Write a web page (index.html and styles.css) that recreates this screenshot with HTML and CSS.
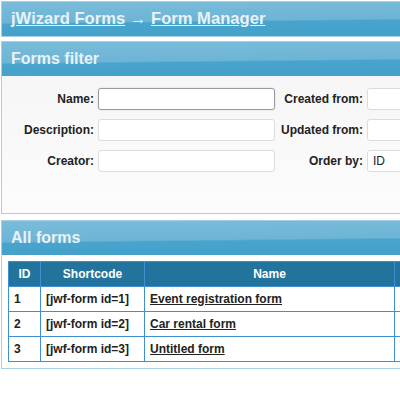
FILE: index.html
```html
<!DOCTYPE html>
<html lang="en">
<head>
  <meta charset="UTF-8" />
  <title>Form Manager</title>
  <link rel="stylesheet" href="styles.css">
</head>
<body>
  <div class="page">
    <div class="panel">
      <h1 class="band"><a href="#">jWizard Forms</a> &rarr; <a href="#">Form Manager</a></h1>
    </div>

    <div class="panel">
      <h2 class="band">Forms filter</h2>
      <div class="filter">
        <label>Name:</label>
        <input class="field" type="text" autofocus />
        <label>Created from:</label>
        <input class="field" type="text" />
        <label>Description:</label>
        <input class="field" type="text" />
        <label>Updated from:</label>
        <input class="field" type="text" />
        <label>Creator:</label>
        <input class="field" type="text" />
        <label>Order by:</label>
        <select class="field">
          <option>ID</option>
          <option>Name</option>
        </select>
      </div>
    </div>

    <div class="panel">
      <h2 class="band">All forms</h2>
      <div class="list">
        <table class="forms">
          <thead>
            <tr>
              <th class="c-id">ID</th>
              <th class="c-code">Shortcode</th>
              <th class="c-name">Name</th>
              <th>Created</th>
            </tr>
          </thead>
          <tbody>
            <tr>
              <td>1</td>
              <td>[jwf-form id=1]</td>
              <td><a href="#">Event registration form</a></td>
              <td class="date">2013-05-14</td>
            </tr>
            <tr>
              <td>2</td>
              <td>[jwf-form id=2]</td>
              <td><a href="#">Car rental form</a></td>
              <td class="date">2013-05-14</td>
            </tr>
            <tr>
              <td>3</td>
              <td>[jwf-form id=3]</td>
              <td><a href="#">Untitled form</a></td>
              <td class="date">2013-05-16</td>
            </tr>
          </tbody>
        </table>
      </div>
    </div>
  </div>
</body>
</html>
```

FILE: styles.css
```css
html, body {
  overflow: hidden;
}
body {
  margin: 0;
  padding: 1px;
  background: #fff;
  font-family: "Liberation Sans", Arial, sans-serif;
  font-size: 12px;
  color: #222;
}
.page {
  width: 560px;
}
.panel {
  border: 1px solid #a9cfe3;
  background: #fff;
  margin-bottom: 4px;
}
.panel + .panel + .panel {
  margin-top: 6px;
}
.band {
  margin: 0;
  height: 34px;
  line-height: 34px;
  padding-left: 9px;
  font-size: 16px;
  font-weight: bold;
  color: #e6f3f9;
  background: linear-gradient(179.4deg, #7abcda 0, #6db4d5 52%, #48a4cc 56%, #42a0ca 100%);
}
h1.band {
  font-size: 16.6px;
}
.band a {
  color: #e6f3f9;
}
.filter {
  display: grid;
  grid-template-columns: 92px 177px 84px 177px;
  column-gap: 4px;
  row-gap: 9px;
  align-items: center;
  padding: 12px 0 41px;
  background: linear-gradient(#f6f6f6, #fcfcfc);
}
.filter label {
  text-align: right;
  font-weight: bold;
}
.field {
  box-sizing: border-box;
  height: 22px;
  margin: 0;
  padding: 0 5px;
  border: 1px solid #dcdcdc;
  border-radius: 3px;
  background: #fff;
  font-family: inherit;
  font-size: 12px;
  color: #222;
  outline: none;
  appearance: none;
}
.field:focus {
  border-color: #9a9a9a;
  box-shadow: 0 0 2px rgba(0, 0, 0, 0.15);
}
.list {
  padding: 6px;
}
.forms {
  border-collapse: collapse;
  width: 540px;
}
.forms th, .forms td {
  border: 1px solid #3e90d2;
  height: 24px;
  padding: 0 5px;
  text-align: left;
}
.forms th {
  background: #22749c;
  color: #fff;
  text-align: center;
  font-weight: bold;
}
.forms td {
  font-weight: bold;
  color: #222;
}
.forms td a {
  color: #222;
}
.c-id {
  width: 21px;
}
.c-code {
  width: 93px;
}
.c-name {
  width: 239px;
}
.forms td.date {
  color: #d6a564;
  font-weight: normal;
}
```
